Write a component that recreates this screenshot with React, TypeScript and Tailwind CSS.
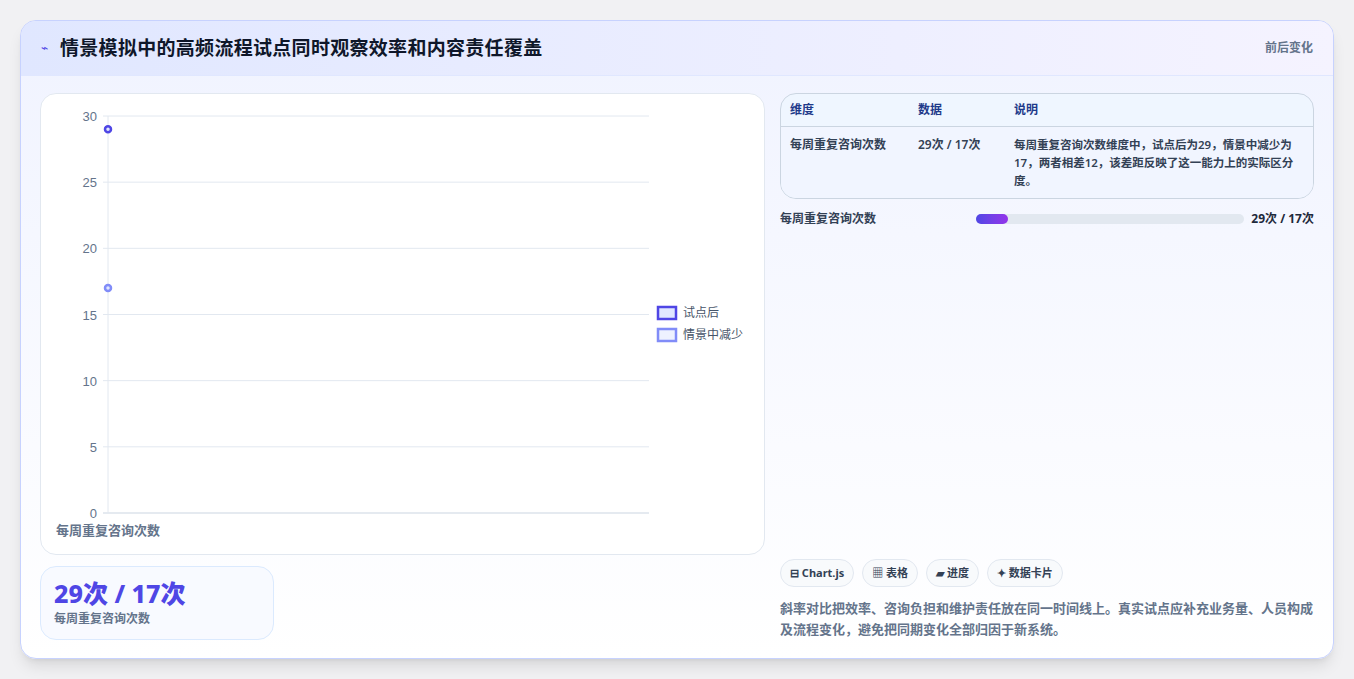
const font = { fontFamily: '"Noto Sans", "Noto Sans CJK SC", sans-serif' };

function Chart() {
  const ticks = [0, 5, 10, 15, 20, 25, 30];
  const y = (v: number) => 419 - (v / 30) * 397;
  return (
    <svg width="724" height="461" className="block">
      {ticks.map((t) => (
        <g key={t}>
          <line x1={62} x2={608} y1={y(t)} y2={y(t)} stroke={t === 0 ? '#cbd5e1' : '#e2e8f0'} strokeWidth="1" />
          <text x={56} y={y(t) + 5} textAnchor="end" fontSize="13" fill="#64748b" fontFamily="Liberation Sans, sans-serif">{t}</text>
        </g>
      ))}
      <line x1={67} x2={67} y1={22} y2={419} stroke="#e2e8f0" />
      <circle cx={67} cy={y(29)} r={3} fill="#e0e7ff" stroke="#4f46e5" strokeWidth="2.5" />
      <circle cx={67} cy={y(17)} r={3} fill="#e0e7ff" stroke="#818cf8" strokeWidth="2.5" />
      <rect x={617} y={213} width={18} height={12} fill="#e0e7ff" stroke="#4f46e5" strokeWidth="2.5" />
      <text x={642} y={223} fontSize="12" fill="#475569" style={font}>试点后</text>
      <rect x={617} y={235} width={18} height={12} fill="#eef2ff" stroke="#818cf8" strokeWidth="2.5" />
      <text x={642} y={245} fontSize="12" fill="#475569" style={font}>情景中减少</text>
      <text x={15} y={441} fontSize="13" fontWeight="600" fill="#64748b" style={font}>每周重复咨询次数</text>
    </svg>
  );
}

export default function App() {
  return (
    <div className="min-h-screen bg-[#f1f1f3] px-5 pt-5 pb-5" style={font}>
      <div className="rounded-2xl border border-[#c7d2fe] bg-gradient-to-b from-[#f0f3ff] to-white shadow-lg overflow-hidden">
        <div className="h-[55px] flex items-center justify-between px-5 bg-gradient-to-r from-[#e0e7ff] to-[#f5f3ff] border-b border-[#e0e7ff]">
          <div className="flex items-center gap-3">
            <span className="text-[#4f46e5] text-xs">⌁</span>
            <h1 className="text-[19px] font-bold text-[#0f172a] tracking-[0.3px]">情景模拟中的高频流程试点同时观察效率和内容责任覆盖</h1>
          </div>
          <span className="text-xs font-semibold text-[#64748b]">前后变化</span>
        </div>
        <div className="flex gap-[15px] px-[19px] pt-[17px] pb-[18px]">
          <div className="w-[725px] flex flex-col gap-[11px]">
            <div className="rounded-2xl border border-[#e2e8f0] bg-white h-[462px]">
              <Chart />
            </div>
            <div className="w-[234px] h-[74px] rounded-2xl border border-[#dbeafe] bg-[#f8faff] px-[13px] pt-[10px]">
              <div className="text-[25px] leading-[32px] font-extrabold text-[#4f46e5]">29次 / 17次</div>
              <div className="text-xs font-semibold text-[#64748b] mt-0.5">每周重复咨询次数</div>
            </div>
          </div>
          <div className="flex-1 flex flex-col">
            <div className="rounded-2xl border border-[#cbd5e1] bg-[#eff6ff] overflow-hidden text-xs font-semibold">
              <div className="grid grid-cols-[128px_96px_1fr] px-[9px] h-[33px] items-center border-b border-[#cbd5e1] text-[#1e3a8a]">
                <div>维度</div><div>数据</div><div>说明</div>
              </div>
              <div className="grid grid-cols-[128px_96px_1fr] px-[9px] pt-[9px] pb-[8px] text-[#334155] leading-[18px] bg-[#f1f5ff]">
                <div>每周重复咨询次数</div>
                <div>29次 / 17次</div>
                <div className="text-[11.5px]">每周重复咨询次数维度中，试点后为29，情景中减少为17，两者相差12，该差距反映了这一能力上的实际区分度。</div>
              </div>
            </div>
            <div className="flex items-center mt-[12px] text-xs font-semibold text-[#334155]">
              <div className="w-[196px]">每周重复咨询次数</div>
              <div className="w-[268px] h-[10px] rounded-full bg-[#e2e8f0]">
                <div className="h-full w-[32px] rounded-full bg-gradient-to-r from-[#4f46e5] to-[#9333ea]" />
              </div>
              <div className="ml-auto font-bold text-[#1e293b]">29次 / 17次</div>
            </div>
            <div className="flex-1" />
            <div className="flex gap-2 text-[11px] font-bold text-[#334155]">
              <span className="px-[9px] h-[28px] flex items-center rounded-full border border-[#e2e8f0] bg-[#f8fafc]">⊟ Chart.js</span>
              <span className="px-[9px] h-[28px] flex items-center rounded-full border border-[#e2e8f0] bg-[#f8fafc]">▦ 表格</span>
              <span className="px-[9px] h-[28px] flex items-center rounded-full border border-[#e2e8f0] bg-[#f8fafc]">▰ 进度</span>
              <span className="px-[9px] h-[28px] flex items-center rounded-full border border-[#e2e8f0] bg-[#f8fafc]">✦ 数据卡片</span>
            </div>
            <p className="mt-[11px] text-[13px] leading-[21px] font-semibold text-[#64748b]">斜率对比把效率、咨询负担和维护责任放在同一时间线上。真实试点应补充业务量、人员构成及流程变化，避免把同期变化全部归因于新系统。</p>
          </div>
        </div>
      </div>
    </div>
  );
}
